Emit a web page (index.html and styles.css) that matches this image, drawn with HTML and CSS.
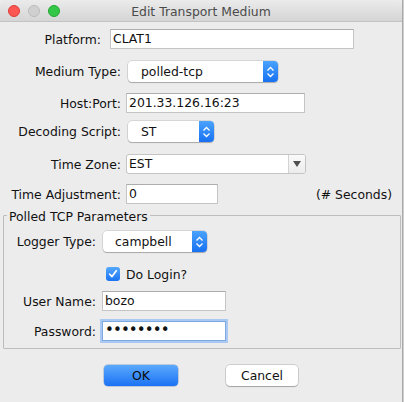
FILE: index.html
```html
<!DOCTYPE html>
<html>
<head>
<meta charset="utf-8">
<link rel="stylesheet" href="styles.css">
</head>
<body>
<div class="window">
  <div class="titlebar">
    <div class="lights">
      <span class="light red"></span>
      <span class="light gray"></span>
      <span class="light green"></span>
    </div>
    <div class="title">Edit Transport Medium</div>
    <div></div>
  </div>

  <div class="form">
    <div class="row row-platform">
      <span class="lbl lbl-platform">Platform:</span>
      <div class="text field-platform">CLAT1</div>
    </div>

    <div class="row row-medium">
      <span class="lbl">Medium Type:</span>
      <div class="popup popup-medium">
        <span class="popup-value">polled-tcp</span>
        <span class="stepper"><svg width="9" height="12" viewBox="0 0 9 12"><path d="M1.5 4.5 L4.5 1.5 L7.5 4.5 M1.5 7.5 L4.5 10.5 L7.5 7.5" fill="none" stroke="#fff" stroke-width="1.3"/></svg></span>
      </div>
    </div>

    <div class="row row-host">
      <span class="lbl">Host:Port:</span>
      <div class="text field-host">201.33.126.16:23</div>
    </div>

    <div class="row row-decoding">
      <span class="lbl">Decoding Script:</span>
      <div class="popup popup-decoding">
        <span class="popup-value">ST</span>
        <span class="stepper"><svg width="9" height="12" viewBox="0 0 9 12"><path d="M1.5 4.5 L4.5 1.5 L7.5 4.5 M1.5 7.5 L4.5 10.5 L7.5 7.5" fill="none" stroke="#fff" stroke-width="1.3"/></svg></span>
      </div>
    </div>

    <div class="row row-tz">
      <span class="lbl">Time Zone:</span>
      <div class="combo">
        <span class="combo-value">EST</span>
        <span class="combo-arrow"><svg width="8" height="6" viewBox="0 0 8 6"><path d="M0 0 H8 L4 6 Z" fill="#505050"/></svg></span>
      </div>
    </div>

    <div class="row row-adj">
      <span class="lbl">Time Adjustment:</span>
      <div class="text field-adj">0</div>
      <span class="unit">(# Seconds)</span>
    </div>

    <div class="group">
      <span class="group-title">Polled TCP Parameters</span>
      <div class="row row-logger">
        <span class="lbl lbl-inner">Logger Type:</span>
        <div class="popup popup-logger">
          <span class="popup-value">campbell</span>
          <span class="stepper"><svg width="9" height="12" viewBox="0 0 9 12"><path d="M1.5 4.5 L4.5 1.5 L7.5 4.5 M1.5 7.5 L4.5 10.5 L7.5 7.5" fill="none" stroke="#fff" stroke-width="1.3"/></svg></span>
        </div>
      </div>

      <div class="row row-check">
        <span class="checkbox"><svg width="10" height="10" viewBox="0 0 10 10"><path d="M1.8 5.2 L4 7.6 L8.3 1.8" fill="none" stroke="#fff" stroke-width="1.7" stroke-linecap="round" stroke-linejoin="round"/></svg></span>
        <span class="check-label">Do Login?</span>
      </div>

      <div class="row row-user">
        <span class="lbl lbl-inner">User Name:</span>
        <div class="text field-user">bozo</div>
      </div>

      <div class="row row-pass">
        <span class="lbl lbl-inner">Password:</span>
        <div class="text field-user focused"><span class="dots">••••••••</span></div>
      </div>
    </div>

    <div class="buttons">
      <div class="btn btn-ok">OK</div>
      <div class="btn btn-cancel">Cancel</div>
    </div>
  </div>
</div>
</body>
</html>
```

FILE: styles.css
```css
html, body {
  margin: 0;
  padding: 0;
}
body {
  background: #cfcfcf;
  font-family: "DejaVu Sans", "Verdana", sans-serif;
  font-size: 12.4px;
  color: #111;
  width: 404px;
  height: 402px;
  overflow: hidden;
}
.window {
  width: 402px;
  height: 402px;
  background: #ececec;
  border-right: 1px solid #a9a9a9;
}
.titlebar {
  height: 22px;
  box-sizing: border-box;
  border-bottom: 1px solid #c3c3c3;
  background: linear-gradient(#ebebeb, #d5d5d5);
  display: grid;
  grid-template-columns: 1fr auto 1fr;
  align-items: center;
  border-top-left-radius: 5px;
  border-top-right-radius: 5px;
}
.lights {
  display: flex;
  gap: 8px;
  padding-left: 8px;
}
.light {
  width: 12px;
  height: 12px;
  border-radius: 50%;
  box-sizing: border-box;
}
.red { background: #fc5753; border: 0.5px solid #df3d38; }
.gray { background: #d0d0d0; border: 0.5px solid #bcbcbc; }
.green { background: #34c748; border: 0.5px solid #22a632; }
.title {
  color: #4b4b4b;
  padding-top: 1px;
}

.form {
  display: flex;
  flex-direction: column;
}
.row {
  display: flex;
  align-items: center;
  height: 20px;
}
.row-platform { margin-top: 7px; }
.row-medium { margin-top: 12px; height: 21px; }
.row-host { margin-top: 11px; }
.row-decoding { margin-top: 8px; height: 21px; }
.row-tz { margin-top: 12px; }
.row-adj { margin-top: 10px; }

.lbl {
  width: 121px;
  text-align: right;
  white-space: nowrap;
  flex: none;
  margin-right: 5px;
}
.lbl-platform {
  width: 101px;
  margin-right: 9px;
}
.lbl-inner {
  width: 92px;
  margin-right: 6px;
}

.text {
  height: 20px;
  box-sizing: border-box;
  background: #fff;
  border: 1px solid #c4c4c4;
  border-top-color: #adadad;
  padding-left: 2px;
  line-height: 18px;
  white-space: nowrap;
}
.field-platform { width: 244px; }
.field-host { width: 179px; }
.field-adj { width: 92px; }
.field-user { width: 124px; }

.unit {
  margin-left: auto;
  margin-right: 10px;
}

.popup {
  height: 21px;
  margin-left: 2px;
  box-sizing: border-box;
  background: #fff;
  border-radius: 4px;
  box-shadow: 0 0 0 0.5px rgba(0, 0, 0, 0.18), 0 1px 1px rgba(0, 0, 0, 0.22);
  display: flex;
  align-items: stretch;
  overflow: hidden;
}
.popup-value {
  flex: 1;
  padding-left: 13px;
  line-height: 21px;
}
.stepper {
  width: 15px;
  background: linear-gradient(#4aa3fd, #1771f2);
  display: flex;
  align-items: center;
  justify-content: center;
}
.popup-medium { width: 150px; }
.popup-decoding { width: 86px; }
.popup-logger { width: 104px; margin-left: 1px; }
.popup-logger .popup-value { padding-left: 12px; }

.combo {
  width: 180px;
  height: 20px;
  box-sizing: border-box;
  background: #fff;
  border: 1px solid #c4c4c4;
  border-radius: 3px;
  display: flex;
}
.combo-value {
  flex: 1;
  padding-left: 2px;
  line-height: 18px;
}
.combo-arrow {
  width: 16px;
  border-left: 1px solid #d2d2d2;
  background: linear-gradient(#fafafa, #ececec);
  display: flex;
  align-items: center;
  justify-content: center;
  border-top-right-radius: 2px;
  border-bottom-right-radius: 2px;
}

.group {
  position: relative;
  margin-top: 11px;
  margin-left: 3px;
  width: 398px;
  height: 134px;
  box-sizing: border-box;
  border: 1px solid #bdbdbd;
  border-radius: 1px;
  padding-top: 15px;
}
.group-title {
  position: absolute;
  top: -6px;
  left: 3px;
  padding: 0 2px;
  background: #ececec;
  line-height: 14px;
}
.row-logger { height: 21px; }
.row-check {
  margin-top: 15px;
  height: 14px;
  padding-left: 102px;
}
.checkbox {
  width: 14px;
  height: 14px;
  box-sizing: border-box;
  border-radius: 3px;
  background: linear-gradient(#54a8fd, #1c74f3);
  display: flex;
  align-items: center;
  justify-content: center;
}
.check-label {
  margin-left: 6px;
}
.row-user { margin-top: 10px; }
.row-pass { margin-top: 10px; }
.focused {
  border: 1px solid #7ea9e3;
  box-shadow: 0 0 0 2px #a9c9f2;
  line-height: 17px;
}
.dots {
  font-size: 15px;
  letter-spacing: -0.9px;
}

.buttons {
  display: flex;
  margin-top: 16px;
  padding-left: 104px;
  gap: 48px;
}
.btn {
  height: 21px;
  box-sizing: border-box;
  border-radius: 4px;
  text-align: center;
  line-height: 21px;
}
.btn-ok {
  width: 74px;
  background: linear-gradient(#5ba9fd, #1b72f4);
  color: #0a0a0a;
  box-shadow: 0 0 0 0.5px rgba(0, 60, 160, 0.4);
}
.btn-cancel {
  width: 72px;
  background: #fff;
  box-shadow: 0 0 0 0.5px rgba(0, 0, 0, 0.25), 0 1px 1px rgba(0, 0, 0, 0.2);
}
```
